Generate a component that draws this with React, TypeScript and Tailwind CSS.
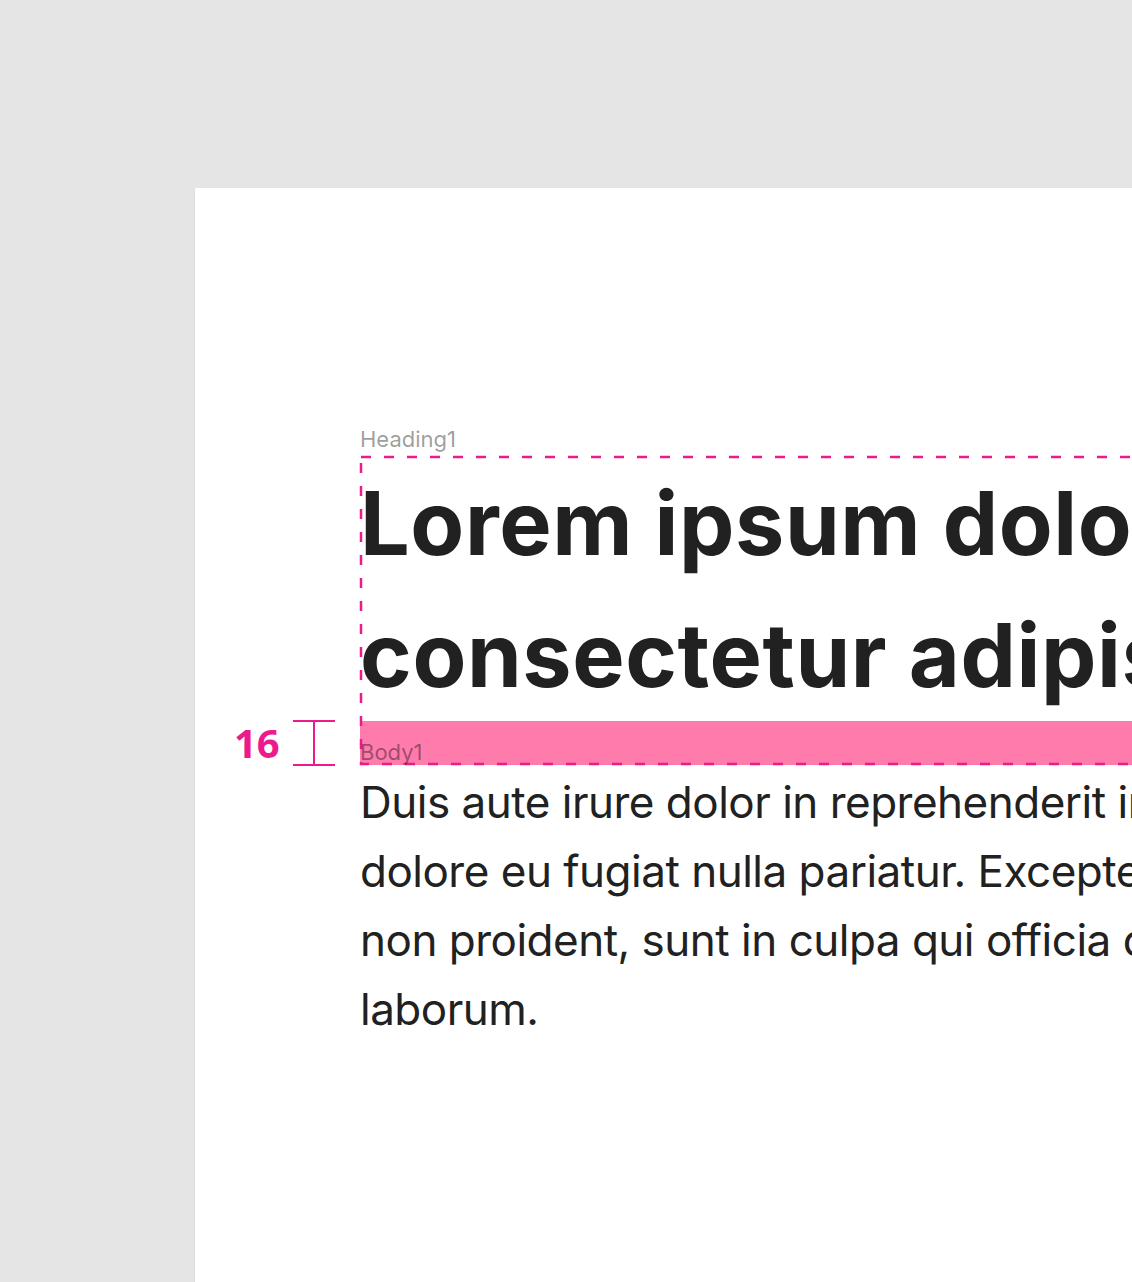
export default function App() {
  return (
    <div className="w-[1132px] h-[1282px] overflow-hidden bg-[#e5e5e5] pt-[188px] pl-[195px] font-['Inter',sans-serif]">
      {/* page */}
      <div className="w-[1400px] h-[1094px] bg-white pt-[238px] pl-[165px] shadow-[-1px_0_0_rgba(0,0,0,0.03)]">
        <p className="text-[22px] leading-[26px] text-black/40 mb-[5px]">Heading1</p>

        {/* heading box with spacing */}
        <div className="relative w-[1200px]">
          <h1 className="text-[88px] leading-[132px] font-bold text-[#212121] whitespace-nowrap tracking-[0.6px]">
            Lorem ipsum dolor sit amet,
            <br />
            consectetur adipiscing elit
          </h1>
          <div className="h-[44px] bg-[#ff7bac]" />

          {/* dashed outline */}
          <svg className="absolute left-0 top-0 w-full h-full overflow-visible pointer-events-none">
            <rect
              x="1"
              y="0"
              width="1196"
              height="307"
              fill="none"
              stroke="#ec1a8c"
              strokeWidth="2.5"
              strokeDasharray="10 13"
            />
          </svg>

          {/* spacing measurement */}
          <div className="absolute left-[-126px] top-[264px] h-[44px] flex items-center gap-[13px]">
            <span className="font-['Open_Sans',sans-serif] font-bold text-[40px] leading-none text-[#ec1a8c]">16</span>
            <svg width="44" height="46" viewBox="0 0 44 46">
              <path d="M0 1H42M21 1V45M0 45H42" stroke="#ec1a8c" strokeWidth="2" fill="none" />
            </svg>
          </div>

          <span className="absolute left-0 top-[282px] text-[22px] leading-[26px] text-black/40">Body1</span>
        </div>

        <p className="pt-[3px] text-[44px] leading-[69px] tracking-[-0.5px] text-[#212121] whitespace-nowrap">
          Duis aute irure dolor in reprehenderit in voluptate velit esse cillum
          <br />
          dolore eu fugiat nulla pariatur. Excepteur sint occaecat cupidatat
          <br />
          non proident, sunt in culpa qui officia deserunt mollit anim id est
          <br />
          laborum.
        </p>
      </div>
    </div>
  );
}
